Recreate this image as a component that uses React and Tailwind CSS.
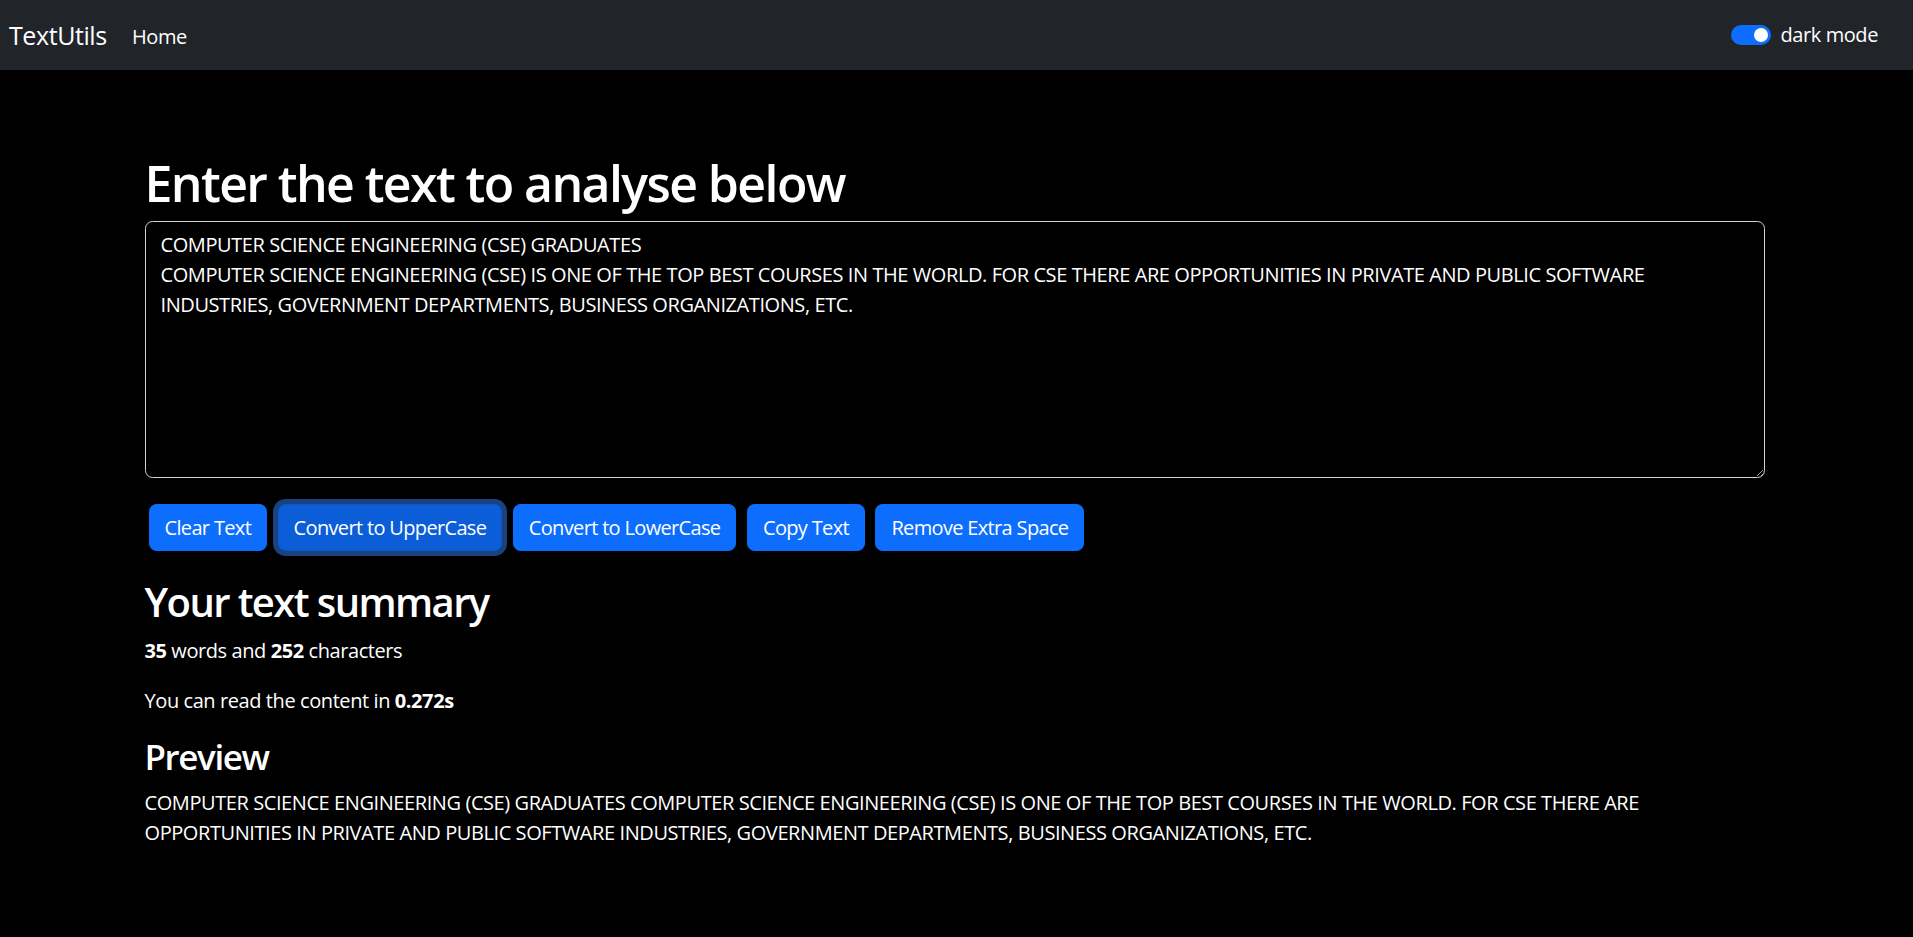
import React, { useState } from "react";

const FONT = "font-['Open_Sans','Liberation_Sans',sans-serif] tracking-[-0.026em]";

const initialText =
  "COMPUTER SCIENCE ENGINEERING (CSE) GRADUATES\nCOMPUTER SCIENCE ENGINEERING (CSE) IS ONE OF THE TOP BEST COURSES IN THE WORLD. FOR CSE THERE ARE OPPORTUNITIES IN PRIVATE AND PUBLIC SOFTWARE INDUSTRIES, GOVERNMENT DEPARTMENTS, BUSINESS ORGANIZATIONS, ETC.";

function Navbar() {
  return (
    <nav className="h-[70px] bg-[#212529] flex items-center pl-[9px] pr-[35px] text-white">
      <span className="w-[123px] text-[25px] leading-[37px]">TextUtils</span>
      <span className="text-[20px] leading-[30px] pt-[3px]">Home</span>
      <div className="ml-auto flex items-center">
        <div className="w-[40px] h-[20px] rounded-full bg-[#0d6efd] flex items-center justify-end pr-[3px]">
          <div className="w-[14px] h-[14px] rounded-full bg-white" />
        </div>
        <span className="ml-[10px] text-[20px] leading-[30px]">dark mode</span>
      </div>
    </nav>
  );
}

function Btn({ children, active }) {
  // the upper-case button is shown pressed, with focus ring
  if (active) {
    return (
      <button className="h-[47px] px-[15px] rounded-[7.5px] border border-[#0a58ca] bg-[#0b5ed7] text-white text-[20px] tracking-[-0.033em] ring-[5px] ring-[#3184fd80]">
        {children}
      </button>
    );
  }
  return (
    <button className="h-[47px] px-[15px] rounded-[7.5px] border border-[#0d6efd] bg-[#0d6efd] text-white text-[20px] tracking-[-0.033em]">
      {children}
    </button>
  );
}

export default function App() {
  const [text, setText] = useState(initialText);
  const words = text.split(/\s+/).filter((w) => w.length > 0).length;

  return (
    <div className={`min-h-[937px] bg-black text-white ${FONT}`}>
      <Navbar />
      <main className="mx-auto w-[1650px] pl-[13px] pr-[17px]">
        <h1 className="mt-[83px] mb-[8px] text-[50px] leading-[60px] font-semibold tracking-[-0.032em]">
          Enter the text to analyse below
        </h1>
        <textarea
          className="block w-full h-[257px] bg-black text-white border border-[#ced4da] rounded-[7.5px] px-[15px] py-[7.5px] text-[20px] leading-[30px] outline-none"
          value={text}
          onChange={(e) => setText(e.target.value)}
        />
        <div className="mt-[26px] pl-[4px] flex gap-[10.5px]">
          <Btn>Clear Text</Btn>
          <Btn active>Convert to UpperCase</Btn>
          <Btn>Convert to LowerCase</Btn>
          <Btn>Copy Text</Btn>
          <Btn>Remove Extra Space</Btn>
        </div>

        <h2 className="mt-[27px] mb-[10px] text-[40px] leading-[48px] font-semibold tracking-[-0.04em]">
          Your text summary
        </h2>
        <p className="mb-[20px] text-[20px] leading-[30px]">
          <b>{words}</b> words and <b>{text.length}</b> characters
        </p>
        <p className="mb-[20px] text-[20px] leading-[30px]">
          You can read the content in <b>0.272s</b>
        </p>
        <h3 className="mb-[10px] text-[35px] leading-[42px] font-semibold tracking-[-0.04em]">Preview</h3>
        <p className="text-[20px] leading-[30px]">{text.replace(/\n/g, " ")}</p>
      </main>
    </div>
  );
}
